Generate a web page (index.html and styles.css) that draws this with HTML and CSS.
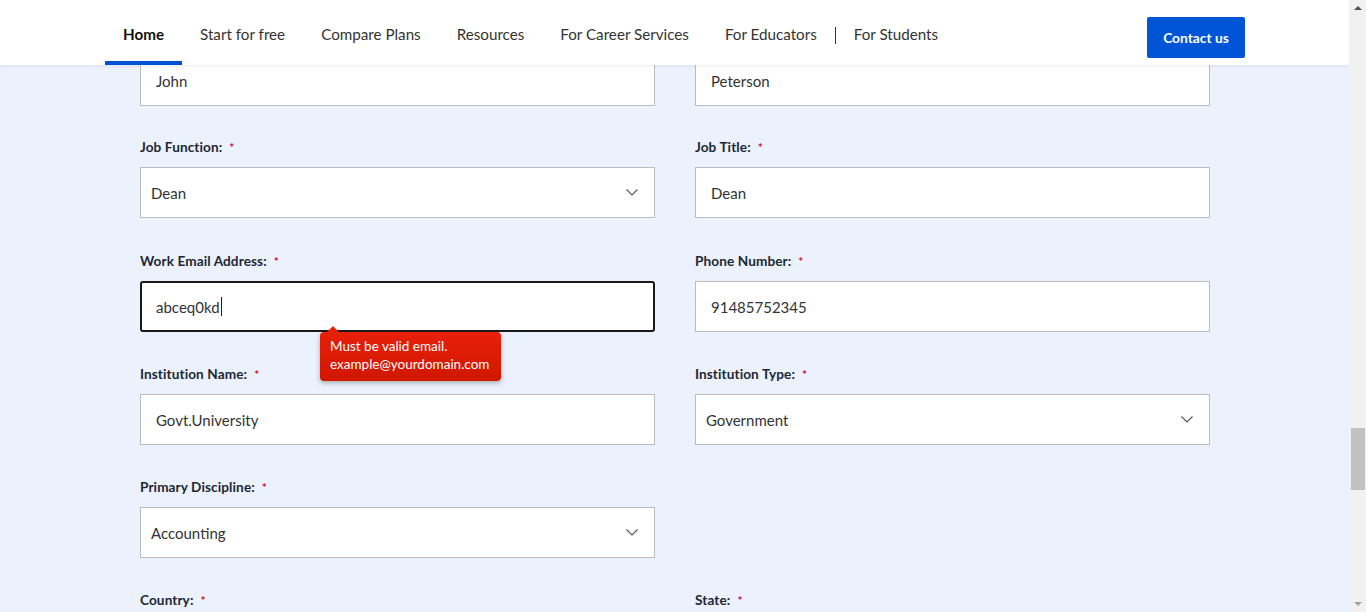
FILE: index.html
```html
<!DOCTYPE html>
<html lang="en">
<head>
<meta charset="utf-8">
<title>Form</title>
<link rel="stylesheet" href="styles.css">
</head>
<body>
<div class="page">
  <div class="main">
    <header class="header">
      <nav class="nav">
        <a class="nav-item active">Home</a>
        <a class="nav-item">Start for free</a>
        <a class="nav-item">Compare Plans</a>
        <a class="nav-item">Resources</a>
        <a class="nav-item">For Career Services</a>
        <a class="nav-item">For Educators</a>
        <span class="nav-sep"></span>
        <a class="nav-item">For Students</a>
      </nav>
      <a class="contact">Contact us</a>
    </header>

    <form class="form">
      <div class="field row-first">
        <label class="label">First Name:<span class="req">*</span></label>
        <div class="input">John</div>
      </div>
      <div class="field row-first">
        <label class="label">Last Name:<span class="req">*</span></label>
        <div class="input">Peterson</div>
      </div>

      <div class="field row-second">
        <label class="label">Job Function:<span class="req">*</span></label>
        <div class="input select">Dean<svg class="chev" viewBox="0 0 12 7"><path d="M0.5 0.5 L6 6 L11.5 0.5" fill="none" stroke="#555" stroke-width="1.1"/></svg></div>
      </div>
      <div class="field row-second">
        <label class="label">Job Title:<span class="req">*</span></label>
        <div class="input">Dean</div>
      </div>

      <div class="field">
        <label class="label">Work Email Address:<span class="req">*</span></label>
        <div class="input focus">abceq0kd<span class="caret"></span></div>
        <div class="tip">Must be valid email.<br>example@yourdomain.com</div>
      </div>
      <div class="field">
        <label class="label">Phone Number:<span class="req">*</span></label>
        <div class="input">91485752345</div>
      </div>

      <div class="field">
        <label class="label">Institution Name:<span class="req">*</span></label>
        <div class="input">Govt.University</div>
      </div>
      <div class="field">
        <label class="label">Institution Type:<span class="req">*</span></label>
        <div class="input select">Government<svg class="chev" viewBox="0 0 12 7"><path d="M0.5 0.5 L6 6 L11.5 0.5" fill="none" stroke="#555" stroke-width="1.1"/></svg></div>
      </div>

      <div class="field">
        <label class="label">Primary Discipline:<span class="req">*</span></label>
        <div class="input select">Accounting<svg class="chev" viewBox="0 0 12 7"><path d="M0.5 0.5 L6 6 L11.5 0.5" fill="none" stroke="#555" stroke-width="1.1"/></svg></div>
      </div>
      <div class="field empty"></div>

      <div class="field">
        <label class="label">Country:<span class="req">*</span></label>
      </div>
      <div class="field">
        <label class="label">State:<span class="req">*</span></label>
      </div>
    </form>
  </div>
  <div class="scrollbar">
    <span class="arrow up"></span>
    <div class="track"><div class="thumb"></div></div>
    <span class="arrow down"></span>
  </div>
</div>
</body>
</html>
```

FILE: styles.css
```css
* { box-sizing: border-box; }
html, body { margin: 0; padding: 0; height: 100%; overflow: hidden; }
body {
  font-family: "Lato", "Noto Sans", sans-serif;
  color: #333;
  background: #ebf2fd;
}
.page { display: flex; height: 612px; }
.main { position: relative; width: 1349px; height: 612px; overflow: hidden; background: #ebf2fd; }

.header {
  position: absolute; top: 0; left: 0; right: 0; height: 65px;
  background: #fff;
  box-shadow: 0 1px 4px rgba(0,0,0,0.08);
  display: flex; align-items: stretch; justify-content: space-between;
  padding: 0 104px 0 105px;
  z-index: 5;
}
.nav { display: flex; align-items: stretch; }
.nav-item {
  display: flex; align-items: center;
  padding: 7px 18px 0;
  font-size: 15.2px; color: #333;
  border-bottom: 4px solid transparent;
  white-space: nowrap;
}
.nav-item.active { font-weight: 700; color: #111; border-bottom-color: #0052d4; }
.nav-sep { width: 1px; height: 17px; background: #333; align-self: center; margin-top: 6px; }
.contact {
  align-self: flex-start; margin-top: 17px;
  width: 98px; height: 41px;
  display: flex; align-items: center; justify-content: center;
  background: #0055d6; color: #fff; font-weight: 700; font-size: 13.8px;
  border-radius: 2px;
}

.form {
  display: grid; grid-template-columns: 515px 515px; column-gap: 40px;
  padding: 28px 0 0 140px;
  margin: 0;
}
.field { position: relative; height: 113px; }
.field.row-first { height: 112px; }
.field.row-second { height: 114px; }
.label {
  display: block; height: 14px; line-height: 14px;
  margin-bottom: 13px;
  font-size: 13.6px; font-weight: 700; color: #1d2733;
  letter-spacing: 0.1px;
}
.req { color: #c8102e; margin-left: 7px; font-size: 12px; }
.input {
  height: 51px; background: #fff; border: 1px solid #bcbcbc;
  display: flex; align-items: center;
  padding: 0 15px; font-size: 15px; color: #333;
}
.input.select { padding-left: 10px; justify-content: space-between; padding-right: 16px; }
.chev { width: 12px; height: 7px; }
.input.focus { border: 2px solid #1a1a1a; border-radius: 3px; padding-left: 14px; }
.caret { display: inline-block; width: 1px; height: 19px; background: #222; margin-left: 1px; }

.tip {
  position: absolute; left: 180px; top: 78px;
  width: 181px; height: 49px;
  padding: 5px 10px 0;
  background: linear-gradient(#e8200a, #cf1700);
  color: #fff; font-size: 13.5px; line-height: 18px;
  border-radius: 4px;
  box-shadow: 0 2px 5px rgba(0,0,0,0.3);
  z-index: 3;
  white-space: nowrap;
}
.tip::before {
  content: ""; position: absolute; left: 7px; top: -6px;
  border-left: 6px solid transparent; border-right: 6px solid transparent;
  border-bottom: 6px solid #e8200a;
}

.scrollbar {
  width: 17px; height: 612px; background: #f1f1f1;
  display: flex; flex-direction: column; align-items: center;
}
.arrow { width: 0; height: 0; border-left: 4px solid transparent; border-right: 4px solid transparent; margin: 6px 0; }
.arrow.up { border-bottom: 4px solid #505050; }
.arrow.down { border-top: 4px solid #a3a3a3; }
.track { flex: 1; width: 100%; position: relative; }
.thumb { position: absolute; left: 2px; right: 1px; top: 412px; height: 62px; background: #c1c1c1; }
```
